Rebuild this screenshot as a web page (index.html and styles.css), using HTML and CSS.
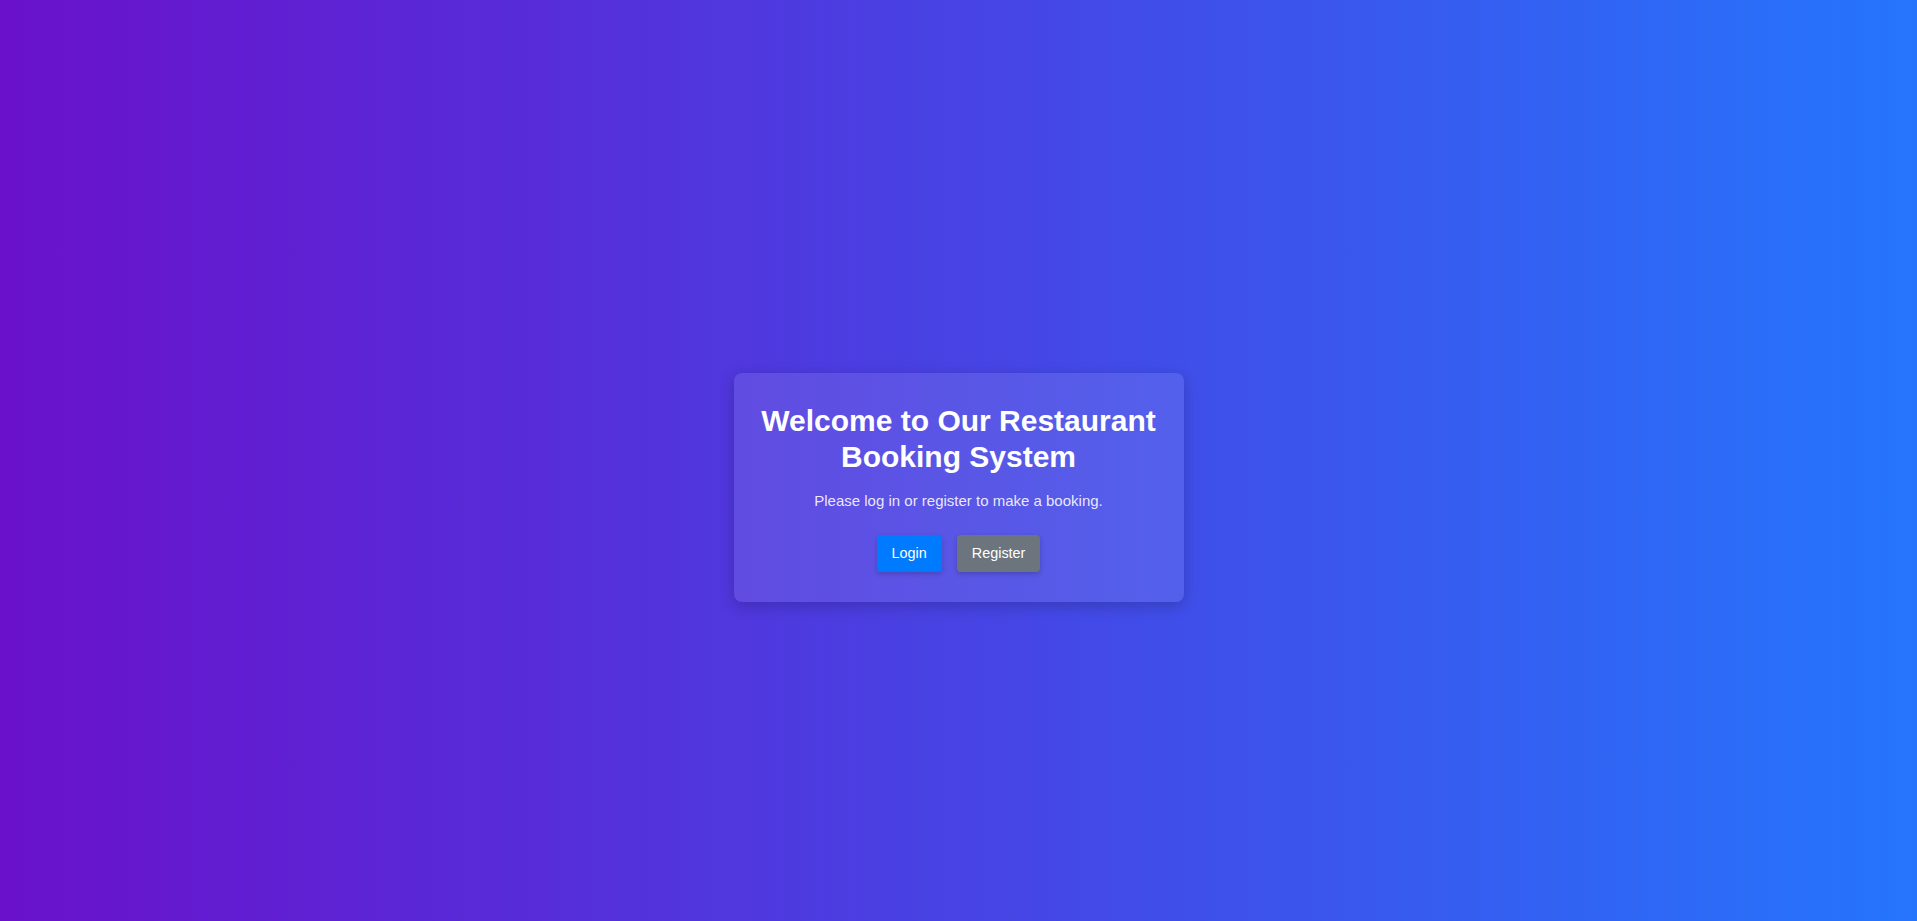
FILE: index.html
```html
<!DOCTYPE html>
<html lang="en">
<head>
<meta charset="utf-8">
<title>Restaurant Booking System</title>
<link rel="stylesheet" href="styles.css">
</head>
<body>
<main class="page">
  <section class="card">
    <h1 class="title">Welcome to Our Restaurant Booking System</h1>
    <p class="lead">Please log in or register to make a booking.</p>
    <div class="actions">
      <a class="btn btn-primary" href="#">Login</a>
      <a class="btn btn-secondary" href="#">Register</a>
    </div>
  </section>
</main>
</body>
</html>
```
FILE: styles.css
```css
html, body {
  margin: 0;
  height: 100%;
}
body {
  font-family: "Liberation Sans", Arial, sans-serif;
  background: linear-gradient(to right, #6a11cb, #2575fc);
  color: #fff;
  overflow: hidden;
}
.page {
  box-sizing: border-box;
  height: 100vh;
  padding-top: 53px;
  display: flex;
  align-items: center;
  justify-content: center;
}
.card {
  box-sizing: border-box;
  width: 450px;
  padding: 30px 20px;
  background: rgba(255, 255, 255, 0.1);
  border-radius: 8px;
  box-shadow: 0 4px 15px rgba(0, 0, 0, 0.2);
  text-align: center;
}
.title {
  margin: 0 0 17px;
  font-size: 30px;
  line-height: 36px;
  font-weight: bold;
}
.lead {
  margin: 0 0 26px;
  font-size: 15px;
  line-height: 17px;
  color: rgba(255, 255, 255, 0.88);
}
.actions {
  display: flex;
  justify-content: center;
  gap: 15px;
}
.btn {
  display: inline-block;
  padding: 10px 15px;
  font-size: 14.4px;
  line-height: 17px;
  color: #fff;
  text-decoration: none;
  border-radius: 4px;
  box-shadow: 0 2px 5px rgba(0, 0, 0, 0.2);
}
.btn-primary {
  background: #007bff;
}
.btn-secondary {
  background: #6c757d;
}
```
